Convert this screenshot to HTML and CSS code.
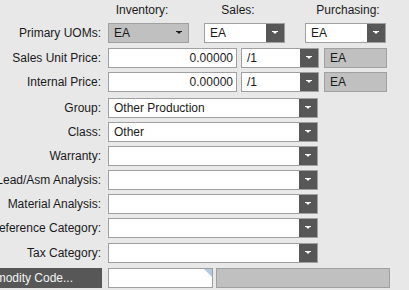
FILE: index.html
```html
<!DOCTYPE html>
<html>
<head>
    <title>Part Entry - UOMs</title>
    <link rel="stylesheet" href="styles.css">
</head>
<body>
    <div class="form">
        <div class="row head">
            <div class="label"></div>
            <div class="uom-group">
                <span class="col-title">Inventory:</span>
                <span class="col-title sales">Sales:</span>
                <span class="col-title purch">Purchasing:</span>
            </div>
        </div>

        <div class="row">
            <div class="label">Primary UOMs:</div>
            <div class="uom-group">
                <div class="combo short locked"><span class="val">EA</span><span class="arrow plain"></span></div>
                <div class="combo short sales"><span class="val">EA</span><span class="arrow"></span></div>
                <div class="combo short purch"><span class="val">EA</span><span class="arrow"></span></div>
            </div>
        </div>

        <div class="row r-price">
            <div class="label">Sales Unit Price:</div>
            <div class="field price">0.00000</div>
            <div class="combo per"><span class="val">/1</span><span class="arrow"></span></div>
            <div class="readonly uom">EA</div>
        </div>

        <div class="row">
            <div class="label">Internal Price:</div>
            <div class="field price">0.00000</div>
            <div class="combo per"><span class="val">/1</span><span class="arrow"></span></div>
            <div class="readonly uom">EA</div>
        </div>

        <div class="row r-group">
            <div class="label">Group:</div>
            <div class="combo wide"><span class="val">Other Production</span><span class="arrow"></span></div>
        </div>

        <div class="row">
            <div class="label">Class:</div>
            <div class="combo wide"><span class="val">Other</span><span class="arrow"></span></div>
        </div>

        <div class="row">
            <div class="label">Warranty:</div>
            <div class="combo wide"><span class="val"></span><span class="arrow"></span></div>
        </div>

        <div class="row">
            <div class="label">Lead/Asm Analysis:</div>
            <div class="combo wide"><span class="val"></span><span class="arrow"></span></div>
        </div>

        <div class="row">
            <div class="label">Material Analysis:</div>
            <div class="combo wide"><span class="val"></span><span class="arrow"></span></div>
        </div>

        <div class="row r-pref">
            <div class="label">Preference Category:</div>
            <div class="combo wide"><span class="val"></span><span class="arrow"></span></div>
        </div>

        <div class="row r-tax">
            <div class="label">Tax Category:</div>
            <div class="combo wide"><span class="val"></span><span class="arrow"></span></div>
        </div>

        <div class="row r-comm">
            <div class="label"><button class="comm-btn">Commodity Code...</button></div>
            <div class="field comm"><span class="corner"></span></div>
            <div class="readonly comm-desc"></div>
        </div>
    </div>
</body>
</html>
```

FILE: styles.css
```css
* {
    box-sizing: border-box;
}
body {
    margin: 0;
    background-color: #e8e8e8;
    font-family: 'Liberation Sans', Arial, sans-serif;
    font-size: 12px;
    color: #1a1a1a;
    overflow: hidden;
    width: 409px;
    height: 290px;
}
.form {
    display: flex;
    flex-direction: column;
    gap: 4px;
}
.row {
    display: flex;
    align-items: center;
    height: 20px;
}
.row.head {
    height: 19px;
    align-items: flex-end;
    padding-bottom: 2px;
}
.r-price {
    margin-top: 1px;
}
.r-group {
    margin-top: 2px;
}
.r-tax,
.r-comm {
    margin-top: 1px;
}
.label {
    width: 101px;
    flex-shrink: 0;
    margin-right: 7px;
    display: flex;
    justify-content: flex-end;
    white-space: nowrap;
}
.uom-group {
    display: flex;
    align-items: center;
}
.col-title {
    width: 80px;
    text-align: center;
    margin-left: -6px;
    margin-right: 6px;
}
.col-title.sales {
    margin-left: 10px;
    margin-right: -10px;
}
.col-title.purch {
    margin-left: 40px;
}

/* combo boxes */
.combo {
    display: flex;
    height: 20px;
    border: 1px solid #a0a0a0;
    background-color: #ffffff;
}
.combo .val {
    flex: 1;
    padding-left: 5px;
    line-height: 18px;
    white-space: nowrap;
    overflow: hidden;
}
.arrow {
    width: 18px;
    background-color: #575757;
    position: relative;
}
.arrow::after {
    content: "";
    position: absolute;
    left: 6px;
    top: 7px;
    width: 0;
    height: 0;
    border-left: 3px solid transparent;
    border-right: 3px solid transparent;
    border-top: 3px solid #ffffff;
    border-bottom: 0;
}
.arrow::before {
    content: "";
    position: absolute;
    left: 6px;
    top: 7px;
    width: 6px;
    height: 1px;
    background-color: #ffffff;
}
.arrow.plain {
    background-color: transparent;
}
.arrow.plain::after {
    border-top-color: #1a1a1a;
}
.arrow.plain::before {
    background-color: #1a1a1a;
}
.combo.short {
    width: 81px;
}
.combo.locked {
    background-color: #c0c0c0;
}
.combo.sales {
    margin-left: 15px;
}
.combo.purch {
    margin-left: 20px;
}
.combo.per {
    width: 78px;
    margin-left: 4px;
}
.combo.wide {
    width: 210px;
}

/* text fields */
.field {
    height: 20px;
    border: 1px solid #a0a0a0;
    background-color: #ffffff;
    line-height: 18px;
    position: relative;
}
.field.price {
    width: 129px;
    text-align: right;
    padding-right: 3px;
}
.field.comm {
    width: 105px;
}
.corner {
    position: absolute;
    top: 0;
    right: 0;
    width: 0;
    height: 0;
    border-top: 8px solid #b4c8e0;
    border-left: 8px solid transparent;
}
.readonly {
    height: 20px;
    border: 1px solid #a0a0a0;
    background-color: #c0c0c0;
    line-height: 18px;
    padding-left: 5px;
}
.readonly.uom {
    width: 63px;
    margin-left: 5px;
}
.readonly.comm-desc {
    width: 174px;
    margin-left: 3px;
}
.comm-btn {
    height: 20px;
    width: 150px;
    flex-shrink: 0;
    border: none;
    background-color: #575757;
    color: #f4f4f4;
    font-family: 'Liberation Sans', Arial, sans-serif;
    font-size: 12px;
    text-align: right;
    padding: 0 29px 0 0;
    margin-right: -1px;
}
```
